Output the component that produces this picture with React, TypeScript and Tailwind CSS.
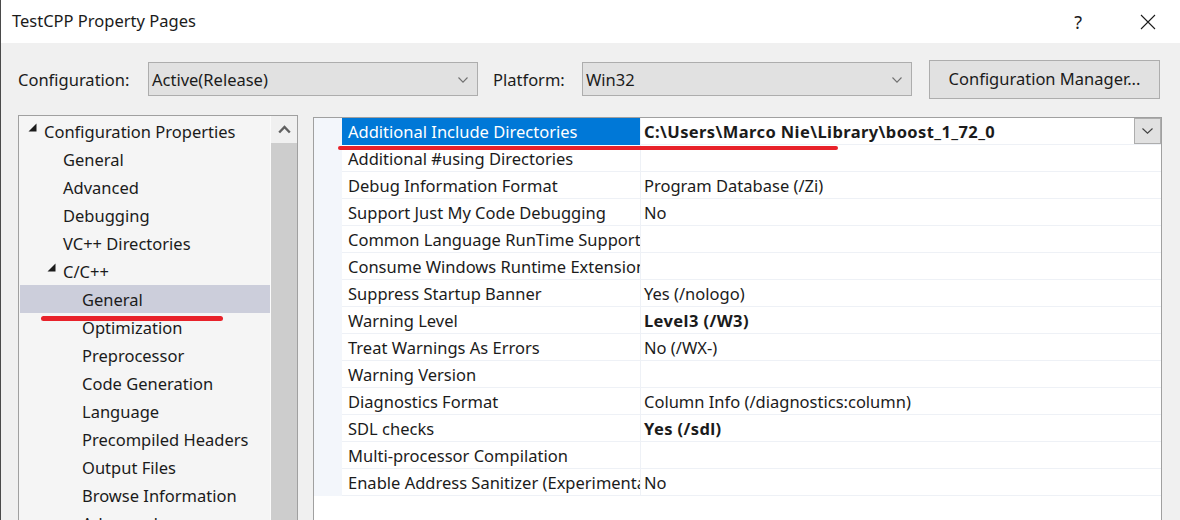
import React from "react";

const font = { fontFamily: '"Noto Sans", "Segoe UI", sans-serif' };

function Tri() {
  return (
    <svg width="9" height="9" viewBox="0 0 9 9" className="shrink-0">
      <polygon points="8.5,0.5 8.5,8.5 0.5,8.5" fill="#1b1b1b" />
    </svg>
  );
}

function Chevron({ color = "#707070", w = 10, h = 6 }: { color?: string; w?: number; h?: number }) {
  return (
    <svg width={w} height={h} viewBox={`0 0 ${w} ${h}`}>
      <polyline points={`0.5,0.5 ${w / 2},${h - 0.8} ${w - 0.5},0.5`} fill="none" stroke={color} strokeWidth="1.1" />
    </svg>
  );
}

const tree: { label: string; level: number; tri?: boolean; sel?: boolean }[] = [
  { label: "Configuration Properties", level: 0, tri: true },
  { label: "General", level: 1 },
  { label: "Advanced", level: 1 },
  { label: "Debugging", level: 1 },
  { label: "VC++ Directories", level: 1 },
  { label: "C/C++", level: 1, tri: true },
  { label: "General", level: 2, sel: true },
  { label: "Optimization", level: 2 },
  { label: "Preprocessor", level: 2 },
  { label: "Code Generation", level: 2 },
  { label: "Language", level: 2 },
  { label: "Precompiled Headers", level: 2 },
  { label: "Output Files", level: 2 },
  { label: "Browse Information", level: 2 },
  { label: "Advanced", level: 2 },
];

const props: { name: string; value: string; bold?: boolean; sel?: boolean }[] = [
  { name: "Additional Include Directories", value: "C:\\Users\\Marco Nie\\Library\\boost_1_72_0", bold: true, sel: true },
  { name: "Additional #using Directories", value: "" },
  { name: "Debug Information Format", value: "Program Database (/Zi)" },
  { name: "Support Just My Code Debugging", value: "No" },
  { name: "Common Language RunTime Support", value: "" },
  { name: "Consume Windows Runtime Extension", value: "" },
  { name: "Suppress Startup Banner", value: "Yes (/nologo)" },
  { name: "Warning Level", value: "Level3 (/W3)", bold: true },
  { name: "Treat Warnings As Errors", value: "No (/WX-)" },
  { name: "Warning Version", value: "" },
  { name: "Diagnostics Format", value: "Column Info (/diagnostics:column)" },
  { name: "SDL checks", value: "Yes (/sdl)", bold: true },
  { name: "Multi-processor Compilation", value: "" },
  { name: "Enable Address Sanitizer (Experimental)", value: "No" },
];

export default function App() {
  return (
    <div
      className="relative w-[1180px] h-[520px] overflow-hidden bg-[#f0f0f0] border-l border-[#4a4a4a] text-[#1b1b1b] flex flex-col"
      style={font}
    >
      {/* Title bar */}
      <div className="h-[43px] shrink-0 bg-white flex items-center pl-[11px] pr-[24px]">
        <div className="text-[16.5px] leading-none">TestCPP Property Pages</div>
        <div className="flex-1" />
        <div className="text-[18px] leading-none text-[#1b1b1b] mr-[58px]">?</div>
        <svg width="16" height="16" viewBox="0 0 16 16">
          <path d="M1 1 L15 15 M15 1 L1 15" stroke="#1b1b1b" strokeWidth="1.1" />
        </svg>
      </div>

      {/* Toolbar */}
      <div className="h-[72px] shrink-0 flex items-center pl-[17px] text-[16.5px] leading-none">
        <span className="w-[130px] pt-[2px]">Configuration:</span>
        <div className="w-[330px] h-[34px] bg-[#e1e1e1] border border-[#adadad] flex items-center pl-[3px] pr-[9px] pt-[2px]">
          <span className="flex-1">Active(Release)</span>
          <Chevron />
        </div>
        <span className="ml-[15px] w-[89px] pt-[2px]">Platform:</span>
        <div className="w-[330px] h-[34px] bg-[#e1e1e1] border border-[#adadad] flex items-center pl-[3px] pr-[9px] pt-[2px]">
          <span className="flex-1">Win32</span>
          <Chevron />
        </div>
        <div className="ml-[17px] w-[231px] h-[39px] bg-[#e1e1e1] border border-[#adadad] flex items-center justify-center">
          Configuration Manager...
        </div>
      </div>

      {/* Main */}
      <div className="flex-1 flex items-start pl-[17px] min-h-0">
        {/* Tree */}
        <div className="w-[280px] h-[420px] border border-[#a0a0a0] bg-[#f5f5f5] flex shrink-0">
          <div className="w-[251px] pt-[1px] text-[16.5px]">
            {tree.map((t, i) => (
              <div
                key={i}
                className={`h-[28px] flex items-center ml-[1px] ${t.sel ? "bg-[#cccedb]" : ""}`}
                style={{ paddingLeft: 24 + t.level * 19 }}
              >
                <span className="w-[0px] relative">
                  {t.tri && (
                    <span className="absolute left-[-16px] top-[-8px]">
                      <Tri />
                    </span>
                  )}
                </span>
                <span className="whitespace-nowrap leading-none pt-[2px]">{t.label}</span>
              </div>
            ))}
          </div>
          <div className="w-[1px] bg-[#fbfbfb]" />
          <div className="w-[26px] flex flex-col">
            <div className="h-[27px] bg-[#f0f0f0] flex items-center justify-center">
              <svg width="13" height="9" viewBox="0 0 13 9">
                <polyline points="1.2,7.5 6.5,2 11.8,7.5" fill="none" stroke="#606060" strokeWidth="2.4" />
              </svg>
            </div>
            <div className="flex-1 bg-[#cdcdcd]" />
          </div>
        </div>

        {/* Property grid */}
        <div className="ml-[15px] mt-[2px] w-[849px] h-[420px] border border-[#a0a0a0] bg-white text-[16.5px] leading-none">
          {props.map((p, i) => (
            <div key={i} className="h-[27px] flex">
              <div className="w-[28px] bg-[#f3f6fb] shrink-0" />
              <div
                className={`w-[299px] shrink-0 flex items-center pl-[6px] pt-[2px] whitespace-nowrap overflow-hidden border-r border-[#eef1f6] ${
                  p.sel ? "bg-[#0078d7] text-white" : "border-b"
                }`}
              >
                {p.name}
              </div>
              <div className="flex-1 flex items-center pl-[3px] border-b border-[#eef1f6] min-w-0">
                <span className={`flex-1 pt-[2px] whitespace-nowrap ${p.bold ? "font-bold tracking-[0.4px]" : ""}`}>{p.value}</span>
                {p.sel && (
                  <div className="w-[27px] h-[26px] self-start bg-[#e1e1e1] border border-[#adadad] flex items-center justify-center">
                    <Chevron color="#404040" w={11} h={6} />
                  </div>
                )}
              </div>
            </div>
          ))}
        </div>
      </div>

      {/* Red annotation underlines */}
      <div className="absolute left-[337px] top-[146px] w-[500px] h-[4px] rounded-full bg-[#e8222a]" />
      <div className="absolute left-[40px] top-[316px] w-[182px] h-[5px] rounded-full bg-[#e8222a]" />
    </div>
  );
}
